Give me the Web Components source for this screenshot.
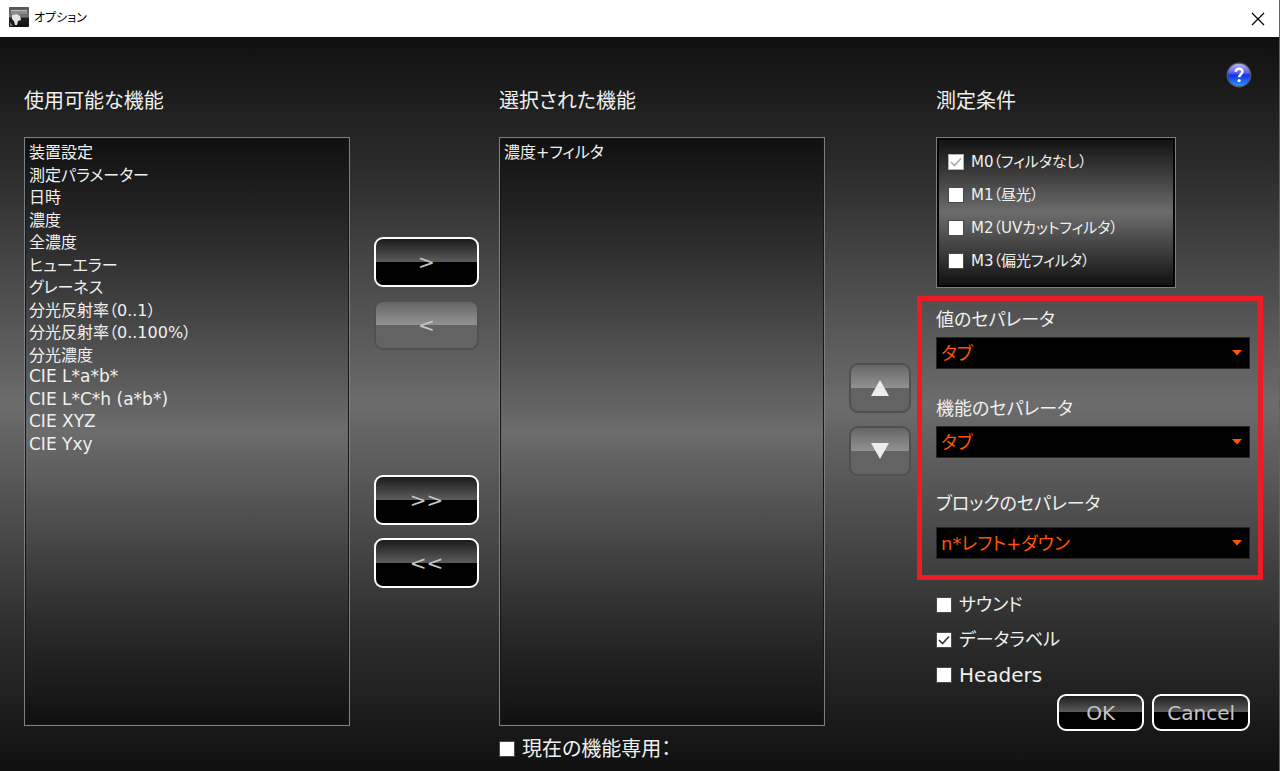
<!DOCTYPE html>
<html lang="ja">
<head>
    <meta charset="UTF-8">
    <meta name="viewport" content="width=device-width, initial-scale=1.0">
    <title>オプション</title>
    <style>
        body {
            margin: 0;
            font-family: "DejaVu Sans", "Noto Sans CJK JP", sans-serif;
            font-feature-settings: "palt";
            color: #f0f0f0;
        }

        .columns {
            flex: 1;
            display: grid;
            grid-template-columns: minmax(0, 1fr) 149px minmax(0, 1fr) 111px 314px;
        }

        .moves {
            display: flex;
            flex-direction: column;
            gap: 13px;
            padding: 200px 20px 0 24px;
        }

        .all {
            margin-top: 112px;
        }

        .order {
            padding: 326px 25px 0 24px;
        }
    </style>
</head>
<body>
    <option-dialog caption="オプション">
        <div class="columns">
            <feature-list caption="使用可能な機能">
                <option>装置設定</option>
                <option>測定パラメーター</option>
                <option>日時</option>
                <option>濃度</option>
                <option>全濃度</option>
                <option>ヒューエラー</option>
                <option>グレーネス</option>
                <option>分光反射率（0..1）</option>
                <option>分光反射率（0..100%）</option>
                <option>分光濃度</option>
                <option lang="en">CIE L*a*b*</option>
                <option lang="en">CIE L*C*h (a*b*)</option>
                <option lang="en">CIE XYZ</option>
                <option lang="en">CIE Yxy</option>
            </feature-list>

            <div class="moves">
                <glass-button>&gt;</glass-button>
                <glass-button disabled>&lt;</glass-button>
                <glass-button class="all">&gt;&gt;</glass-button>
                <glass-button>&lt;&lt;</glass-button>
            </div>

            <feature-list caption="選択された機能">
                <option>濃度+フィルタ</option>
                <check-option slot="footer" large>現在の機能専用：</check-option>
            </feature-list>

            <div class="moves order">
                <glass-button disabled label="上へ">
                    <svg width="20" height="18" viewBox="0 0 20 18"><path d="M10 1 19 17H1Z" fill="#ececec"/></svg>
                </glass-button>
                <glass-button disabled label="下へ">
                    <svg width="20" height="18" viewBox="0 0 20 18"><path d="M10 17 1 1H19Z" fill="#ececec"/></svg>
                </glass-button>
            </div>

            <settings-panel caption="測定条件">
                <check-option slot="conditions" small checked disabled>M0（フィルタなし）</check-option>
                <check-option slot="conditions" small>M1（昼光）</check-option>
                <check-option slot="conditions" small>M2（UVカットフィルタ）</check-option>
                <check-option slot="conditions" small>M3（偏光フィルタ）</check-option>

                <separator-select slot="separators" caption="値のセパレータ" value="タブ"></separator-select>
                <separator-select slot="separators" caption="機能のセパレータ" value="タブ"></separator-select>
                <separator-select slot="separators" caption="ブロックのセパレータ" value="n*レフト+ダウン" spaced></separator-select>

                <check-option>サウンド</check-option>
                <check-option checked>データラベル</check-option>
                <check-option large>Headers</check-option>

                <glass-button slot="actions" compact>OK</glass-button>
                <glass-button slot="actions" compact>Cancel</glass-button>
            </settings-panel>
        </div>
    </option-dialog>

    <script>
        class OptionDialog extends HTMLElement {
            constructor() {
                super();
                this.attachShadow({ mode: 'open' });
                this.shadowRoot.innerHTML = `
                    <style>
                        :host {
                            box-sizing: border-box;
                            min-height: 100vh;
                            display: flex;
                            flex-direction: column;
                            border-right: 1px solid #1f73ba;
                        }
                        header {
                            display: flex;
                            align-items: center;
                            gap: 5px;
                            height: 37px;
                            padding: 0 14px 0 9px;
                            background: white;
                            color: black;
                        }
                        header > svg {
                            margin-bottom: 3px;
                        }
                        h1 {
                            flex: 1;
                            margin: 0;
                            padding-bottom: 2px;
                            font-size: 12px;
                            font-weight: normal;
                            line-height: 20px;
                        }
                        button {
                            display: flex;
                            padding: 0;
                            border: none;
                            background: none;
                        }
                        main {
                            flex: 1;
                            display: flex;
                            padding: 0 29px 0 24px;
                            background: linear-gradient(#101010, #2c2c2c 18%, #6c6c6c 50%, #2c2c2c 82%, #101010);
                        }
                    </style>
                    <header>
                        <svg width="20" height="20" viewBox="0 0 20 20" aria-hidden="true">
                            <defs>
                                <linearGradient id="tile" x1="0" y1="0" x2="0" y2="1">
                                    <stop offset="0" stop-color="#555"/>
                                    <stop offset=".5" stop-color="#777"/>
                                    <stop offset=".55" stop-color="#222"/>
                                    <stop offset="1" stop-color="#111"/>
                                </linearGradient>
                            </defs>
                            <rect width="20" height="20" rx="1" fill="url(#tile)"/>
                            <path d="M2 3h16v4H2z" fill="#8c8c8c"/>
                            <path d="M2 3h16v1H2z" fill="#bbb"/>
                            <path d="M3 8 8 7l3 2 1 4-3 1-1 4H6l-1-4-2-2z" fill="#e4e4e4"/>
                            <path d="M1 15l3 4H1z" fill="#777"/>
                        </svg>
                        <h1></h1>
                        <button type="button" aria-label="閉じる">
                            <svg width="14" height="14" viewBox="0 0 14 14"><path d="M1 1 13 13M13 1 1 13" stroke="#000" stroke-width="1.2"/></svg>
                        </button>
                    </header>
                    <main><slot></slot></main>
                `;
            }

            connectedCallback() {
                this.shadowRoot.querySelector('h1').textContent = this.getAttribute('caption');
            }
        }

        class FeatureList extends HTMLElement {
            constructor() {
                super();
                this.attachShadow({ mode: 'open' });
                this.shadowRoot.innerHTML = `
                    <style>
                        :host {
                            display: grid;
                            grid-template-rows: 100px minmax(0, 1fr) 45px;
                        }
                        label {
                            align-self: end;
                            padding-bottom: 24px;
                            font-size: 20px;
                            line-height: 24px;
                        }
                        select {
                            width: 100%;
                            height: 100%;
                            box-sizing: border-box;
                            padding: 2px 4px;
                            border: 1px solid #7b7e86;
                            border-radius: 0;
                            outline: none;
                            overflow: hidden;
                            background: linear-gradient(#101010, #2c2c2c 18%, #6c6c6c 50%, #2c2c2c 82%, #101010);
                            box-shadow: inset 0 0 0 1px #151719;
                            color: inherit;
                            font: inherit;
                            font-size: 16px;
                            font-feature-settings: inherit;
                        }
                        option {
                            box-sizing: content-box;
                            display: flex;
                            align-items: center;
                            height: 22px;
                            min-height: 0;
                            padding: 0;
                        }
                        option:nth-child(even) {
                            padding-top: 1px;
                        }
                        option:lang(en) {
                            font-size: 17px;
                        }
                        footer {
                            display: flex;
                            align-items: center;
                        }
                    </style>
                    <label for="list"></label>
                    <select id="list" multiple></select>
                    <footer><slot name="footer"></slot></footer>
                `;
            }

            connectedCallback() {
                this.shadowRoot.querySelector('label').textContent = this.getAttribute('caption');
                this.shadowRoot.querySelector('select').append(...this.querySelectorAll('option'));
            }
        }

        class GlassButton extends HTMLElement {
            constructor() {
                super();
                this.attachShadow({ mode: 'open' });
                this.shadowRoot.innerHTML = `
                    <style>
                        :host {
                            display: block;
                        }
                        button {
                            width: 100%;
                            height: 50px;
                            display: flex;
                            align-items: center;
                            justify-content: center;
                            padding: 0;
                            border: 2px solid white;
                            border-radius: 9px;
                            background: linear-gradient(#161616, #5c5c5c 50%, #000 50%);
                            background-origin: border-box;
                            color: #c6c6c6;
                            font: inherit;
                            font-size: 20px;
                            line-height: 24px;
                        }
                        button:disabled {
                            border-color: #505050;
                            background: linear-gradient(#666, #929292 50%, #636363 50%);
                        }
                        :host([compact]) button {
                            height: 37px;
                            padding: 0 13px;
                        }
                        :host([compact]) {
                            min-width: 87px;
                        }
                    </style>
                    <button type="button"><slot></slot></button>
                `;
            }

            connectedCallback() {
                const button = this.shadowRoot.querySelector('button');
                button.disabled = this.hasAttribute('disabled');
                if (this.hasAttribute('label')) {
                    button.setAttribute('aria-label', this.getAttribute('label'));
                }
            }
        }

        class CheckOption extends HTMLElement {
            constructor() {
                super();
                this.attachShadow({ mode: 'open' });
                this.shadowRoot.innerHTML = `
                    <style>
                        :host {
                            display: block;
                            font-size: 18px;
                        }
                        :host([small]) {
                            font-size: 15px;
                        }
                        :host([large]) {
                            font-size: 20px;
                        }
                        label {
                            display: flex;
                            align-items: center;
                            gap: 7px;
                            line-height: 24px;
                            white-space: nowrap;
                        }
                        .box {
                            display: grid;
                        }
                        input, svg {
                            grid-area: 1 / 1;
                            width: 16px;
                            height: 16px;
                        }
                        input {
                            appearance: none;
                            margin: 0;
                            border: 1px solid #4a4a4a;
                            background: white;
                        }
                        svg {
                            visibility: hidden;
                            pointer-events: none;
                            fill: none;
                            stroke: #333;
                            stroke-width: 1.6;
                        }
                        input:checked + svg {
                            visibility: visible;
                        }
                        input:disabled {
                            border-color: #b0b0b0;
                        }
                        input:disabled + svg {
                            stroke: #aaa;
                        }
                    </style>
                    <label>
                        <span class="box">
                            <input type="checkbox">
                            <svg viewBox="0 0 16 16"><path d="M3 8 6.5 11.5 13 4.5"/></svg>
                        </span>
                        <span><slot></slot></span>
                    </label>
                `;
            }

            connectedCallback() {
                const input = this.shadowRoot.querySelector('input');
                input.checked = this.hasAttribute('checked');
                input.disabled = this.hasAttribute('disabled');
            }
        }

        class SeparatorSelect extends HTMLElement {
            constructor() {
                super();
                this.attachShadow({ mode: 'open' });
                this.shadowRoot.innerHTML = `
                    <style>
                        :host {
                            display: grid;
                            gap: 5px;
                            font-size: 18px;
                        }
                        :host([spaced]) {
                            gap: 11px;
                            margin-top: 6px;
                        }
                        label {
                            line-height: 24px;
                        }
                        .field {
                            display: grid;
                            align-items: center;
                        }
                        select, svg {
                            grid-area: 1 / 1;
                        }
                        select {
                            appearance: none;
                            height: 32px;
                            padding: 0 24px 0 4px;
                            border: 1px solid #262626;
                            border-radius: 0;
                            background: black;
                            color: #ff5500;
                            font: inherit;
                            font-feature-settings: inherit;
                        }
                        svg {
                            justify-self: end;
                            margin-right: 8px;
                            pointer-events: none;
                        }
                    </style>
                    <label for="value"></label>
                    <div class="field">
                        <select id="value"><option></option></select>
                        <svg width="10" height="6" viewBox="0 0 10 6"><path d="M0 0h10L5 5.5z" fill="#ff5500"/></svg>
                    </div>
                `;
            }

            connectedCallback() {
                this.shadowRoot.querySelector('label').textContent = this.getAttribute('caption');
                this.shadowRoot.querySelector('option').textContent = this.getAttribute('value');
            }
        }

        class SettingsPanel extends HTMLElement {
            constructor() {
                super();
                this.attachShadow({ mode: 'open' });
                this.shadowRoot.innerHTML = `
                    <style>
                        :host {
                            display: block;
                        }
                        header {
                            display: flex;
                            justify-content: space-between;
                            align-items: flex-end;
                            height: 100px;
                        }
                        h2 {
                            margin: 0;
                            padding-bottom: 24px;
                            font-size: 20px;
                            font-weight: normal;
                            line-height: 24px;
                        }
                        .help {
                            display: flex;
                            align-self: flex-start;
                            margin: 25px -2px 0 0;
                            padding: 0;
                            border: none;
                            background: none;
                        }
                        .conditions {
                            display: grid;
                            gap: 9px;
                            width: 240px;
                            box-sizing: border-box;
                            padding: 12px 11px 14px;
                            border: 1px solid #7b7e86;
                            background: linear-gradient(#101010, #6c6c6c 50%, #101010);
                            box-shadow: inset 0 0 0 2px #050505;
                        }
                        .separators {
                            display: grid;
                            gap: 28px;
                            margin: 8px -13px 13px -19px;
                            padding: 7px 8px 16px 14px;
                            border: 5px solid #ed1c24;
                        }
                        .checks {
                            display: grid;
                            gap: 11px;
                        }
                        .actions {
                            display: flex;
                            justify-content: flex-end;
                            gap: 8px;
                            margin-top: 7px;
                        }
                    </style>
                    <header>
                        <h2></h2>
                        <button class="help" type="button" aria-label="ヘルプ">
                            <svg width="26" height="26" viewBox="0 0 26 26">
                                <defs>
                                    <linearGradient id="ball" x1="0" y1="0" x2="0" y2="1">
                                        <stop offset="0" stop-color="#b9b9f2"/>
                                        <stop offset=".42" stop-color="#5a5ae8"/>
                                        <stop offset=".5" stop-color="#1230f0"/>
                                        <stop offset="1" stop-color="#2a9cff"/>
                                    </linearGradient>
                                </defs>
                                <circle cx="13" cy="13" r="11.8" fill="url(#ball)" stroke="#55585e" stroke-width="1.2"/>
                                <path d="M9.7 9.8c0-4.2 6.8-4 6.8-.2 0 2.6-3.4 2.6-3.4 5.6" fill="none" stroke="#fff" stroke-width="2.6"/>
                                <circle cx="13.1" cy="18.6" r="1.6" fill="#fff"/>
                            </svg>
                        </button>
                    </header>
                    <div class="conditions"><slot name="conditions"></slot></div>
                    <div class="separators"><slot name="separators"></slot></div>
                    <div class="checks"><slot></slot></div>
                    <div class="actions"><slot name="actions"></slot></div>
                `;
            }

            connectedCallback() {
                this.shadowRoot.querySelector('h2').textContent = this.getAttribute('caption');
            }
        }

        customElements.define('option-dialog', OptionDialog);
        customElements.define('feature-list', FeatureList);
        customElements.define('glass-button', GlassButton);
        customElements.define('check-option', CheckOption);
        customElements.define('separator-select', SeparatorSelect);
        customElements.define('settings-panel', SettingsPanel);
    </script>
</body>
</html>
